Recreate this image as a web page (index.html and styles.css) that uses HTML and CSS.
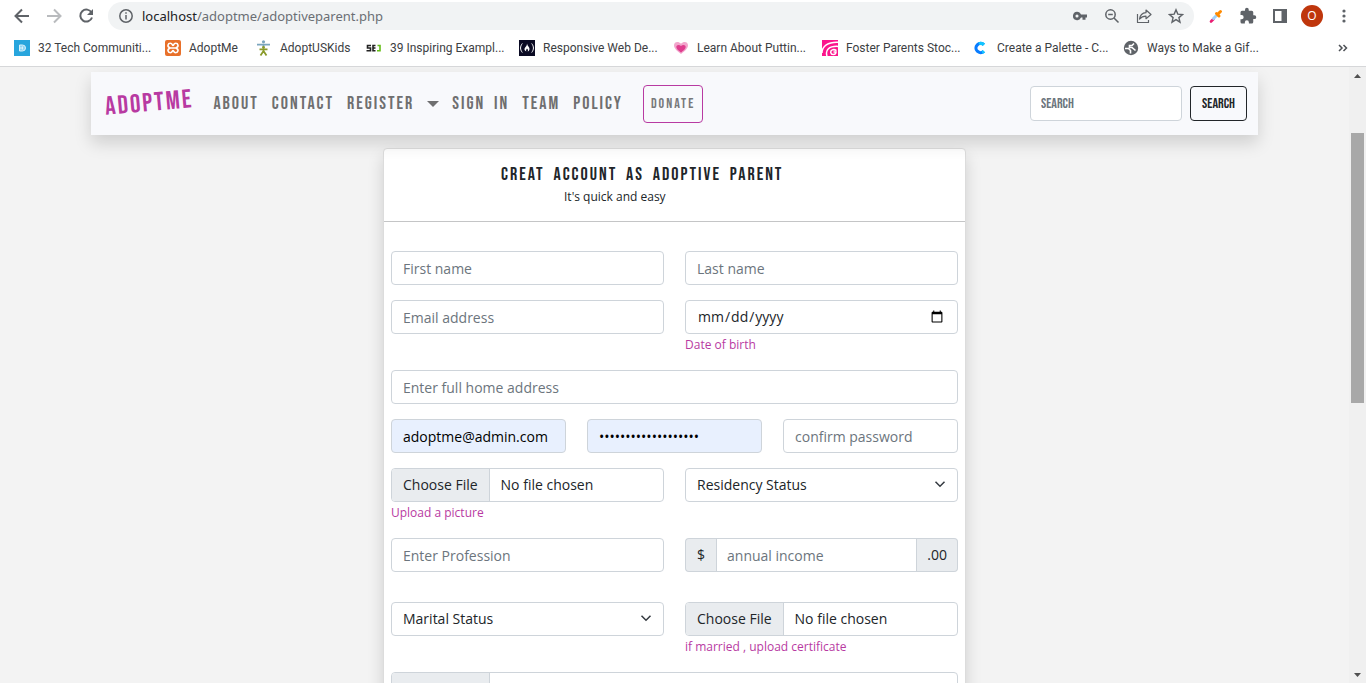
FILE: index.html
```html
<!DOCTYPE html>
<html lang="en-US">
<head>
<meta charset="utf-8">
<title>AdoptMe</title>
<link rel="stylesheet" href="styles.css">
</head>
<body>
<header class="browser">
  <div class="toolbar">
    <button class="tool" aria-label="Back"><svg width="20" height="20" viewBox="0 0 20 20" fill="none" stroke="#5f6368" stroke-width="2"><path d="M17 10H4M10 3.500L3.500 10l6.500 6.500"/></svg></button>
    <button class="tool" aria-label="Forward"><svg width="20" height="20" viewBox="0 0 20 20" fill="none" stroke="#b9bbbe" stroke-width="2"><path d="M3 10h13M10 3.500l6.500 6.500-6.500 6.500"/></svg></button>
    <button class="tool" aria-label="Reload"><svg width="20" height="20" viewBox="0 0 20 20"><path d="M15.600 6.700A6 6 0 1 0 16 11.500" fill="none" stroke="#5f6368" stroke-width="2"/><path d="M17 3v6h-6z" fill="#5f6368"/></svg></button>
    <div class="address">
      <svg width="16" height="16" viewBox="0 0 16 16" fill="none" stroke="#5f6368" stroke-width="1.500"><circle cx="8" cy="8" r="6.200"/><path d="M8 7v4.500M8 4.200v1.600"/></svg>
      <span class="url"><b>localhost</b>/adoptme/adoptiveparent.php</span>
      <button class="tool" aria-label="Passwords"><svg width="16" height="16" viewBox="0 0 16 16"><path fill="#5f6368" fill-rule="evenodd" d="M5 3.700a4.200 4.200 0 0 1 4 2.900h6v3h-1.500v2.200h-3V9.600H9A4.200 4.200 0 1 1 5 3.700zm0 2.700a1.500 1.500 0 1 0 0 3.100 1.500 1.500 0 0 0 0-3.100z"/></svg></button>
      <button class="tool" aria-label="Zoom out"><svg width="16" height="16" viewBox="0 0 16 16" fill="none" stroke="#5f6368" stroke-width="1.500"><circle cx="6.500" cy="6.500" r="4.700"/><path d="M10 10l4.500 4.500M4.200 6.500h4.600"/></svg></button>
      <button class="tool" aria-label="Share"><svg width="16" height="16" viewBox="0 0 16 16" fill="none" stroke="#5f6368" stroke-width="1.200" stroke-linejoin="round"><path d="M1.500 6v8.500h11V12M10 2l5 4.500-5 4.200V8.200c-3 0-4.800.8-6.500 2.800C4 7.600 6 5 10 4.700z"/></svg></button>
      <button class="tool" aria-label="Bookmark"><svg width="16" height="16" viewBox="0 0 16 16" fill="none" stroke="#5f6368" stroke-width="1.400"><path d="M8 1.800l1.800 4.300 4.700.4-3.600 3.100 1.100 4.600L8 11.700l-4 2.500 1.100-4.600-3.600-3.100 4.700-.4z"/></svg></button>
    </div>
    <button class="tool" aria-label="Color picker"><svg width="16" height="16" viewBox="0 0 16 16" stroke-linecap="round"><path d="M3 13.500l2.500-2.500" stroke="#e91e73" stroke-width="2.600"/><path d="M5.500 10.500L9 7" stroke="#9fd0fa" stroke-width="3"/><path d="M8.500 5.500l2.500 2.500M10.500 5.500l2-2" stroke="#ff8a00" stroke-width="3"/></svg></button>
    <button class="tool" aria-label="Extensions"><svg width="18" height="18" viewBox="0 0 24 24" fill="#5f6368"><path d="M20.500 11H19V7a2 2 0 0 0-2-2h-4V3.500a2.500 2.500 0 0 0-5 0V5H4a2 2 0 0 0-2 2v3.800h1.500a2.700 2.700 0 0 1 0 5.400H2V20a2 2 0 0 0 2 2h3.800v-1.500a2.700 2.700 0 0 1 5.400 0V22H17a2 2 0 0 0 2-2v-4h1.500a2.500 2.500 0 0 0 0-5z"/></svg></button>
    <button class="tool" aria-label="Side panel"><svg width="16" height="16" viewBox="0 0 16 16"><path fill="#5f6368" fill-rule="evenodd" d="M1 1h14v14H1zM3 3v10h6.500V3z"/></svg></button>
    <button class="tool" aria-label="Profile"><span class="avatar">O</span></button>
    <button class="tool" aria-label="Menu"><svg width="16" height="16" viewBox="0 0 16 16" fill="#5f6368"><circle cx="8" cy="3" r="1.600"/><circle cx="8" cy="8" r="1.600"/><circle cx="8" cy="13" r="1.600"/></svg></button>
  </div>
  <nav class="bookmarks" aria-label="Bookmarks">
    <a href="#"><svg width="16" height="16" viewBox="0 0 16 16"><path fill="#27a5dd" d="M0 0h16v16H0z"/><path d="M5.500 5h3a3 3 0 0 1 0 6h-3zM5 8h4M8.500 6.500v3" fill="#8ed3f2" stroke="#d7f0fb" stroke-width="1"/></svg>32 Tech Communiti...</a>
    <a href="#"><svg width="16" height="16" viewBox="0 0 16 16"><rect width="16" height="16" rx="2" fill="#e8702a"/><path d="M5.200 8C1.500 6.500 3 3.300 5.300 3.300S7.200 5.500 8 5.500s.4-2.200 2.700-2.200S14.500 6.500 10.800 8c3.700 1.500 2.200 4.700-.1 4.700S8.800 10.500 8 10.500s-.4 2.200-2.700 2.200S1.500 9.500 5.200 8zM5 8h6" fill="none" stroke="#fff" stroke-width="1.600"/></svg>AdoptMe</a>
    <a href="#"><svg width="16" height="16" viewBox="0 0 16 16" fill="none"><circle cx="7.500" cy="1.800" r="1.600" fill="#7ba5bd"/><path d="M1 4.600h13M7.500 4v4" stroke="#7ba5bd" stroke-width="1.800"/><circle cx="7.500" cy="7.500" r="1.400" fill="#8a9a2a"/><path d="M3.500 9.300h8M7.500 9v3M7.500 11l-3 4.500M7.500 11l3 4.500" stroke="#8a9a2a" stroke-width="1.800"/></svg>AdoptUSKids</a>
    <a href="#"><svg width="16" height="16" viewBox="0 0 16 16" fill="none" stroke-width="1.600"><path stroke="#222" d="M5 5.500H1.500V8h3v2.700H.5M9.500 5.500H7v5.200h2.500M7 8h2.500"/><path stroke="#64bd16" d="M11.500 5.500H14v5.200h-3"/></svg>39 Inspiring Exampl...</a>
    <a href="#"><svg width="16" height="16" viewBox="0 0 16 16"><path fill="#0a0a23" d="M0 0h16v16H0z"/><path d="M3.300 3.500c-2.300 3-2.300 6 0 9M12.700 3.500c2.300 3 2.300 6 0 9" stroke="#fff" fill="none"/><path d="M8 3.500c.3 2.500 2.700 3.500 2.500 5.500-.1 1.500-1 2.200-1.800 2.500.6-1.300.3-2-.7-3-.7 1.200-1.300 1.700-.7 3C5 10.500 5 8.600 6.500 7 7.500 6 8 5 8 3.500z" fill="#fff"/></svg>Responsive Web De...</a>
    <a href="#"><svg width="16" height="16" viewBox="0 0 16 16"><path fill="#f2a6cc" d="M8 14C4 11 1 8.500 1 5.300 1 1.600 5.500.8 8 3.800c2.500-3 7-2.200 7 1.500C15 8.500 12 11 8 14z"/><path fill="#df3d8e" d="M8 12.500c-2.600-2-4.700-3.700-4.700-5.500 0-2.400 3-2.800 4.700-1 1.700-1.800 4.700-1.400 4.700 1 0 1.800-2.100 3.500-4.700 5.500z"/></svg>Learn About Puttin...</a>
    <a href="#"><svg width="16" height="16" viewBox="0 0 16 16"><path fill="#fb158c" d="M0 0h16v16H0z"/><path d="M0 13C0 6 6 1.800 16 2.200M5 16c-2-6 2-10 11-9.600M14.500 10.600C11.500 8.600 8.400 10 8.800 12.600s5.200 2.600 5.200-.6h-2.500" fill="none" stroke="#fff" stroke-width="1.500"/></svg>Foster Parents Stoc...</a>
    <a href="#"><svg width="16" height="16" viewBox="0 0 16 16"><path d="M10.800 4.700A4.600 4.600 0 1 0 10.800 11.300" fill="none" stroke="#087cff" stroke-width="3.200"/><path d="M6 3.900a4.300 4.300 0 0 1 5 1M9 12.300a4 4 0 0 0 2-1.200" fill="none" stroke="#12c4ff" stroke-width="3.200"/></svg>Create a Palette - C...</a>
    <a href="#"><svg width="16" height="16" viewBox="0 0 16 16"><circle cx="8" cy="8" r="7.200" fill="#5f6368"/><path d="M2 8.500h3.500l2 2v3M12.500 10.500L9 7.500H6.500V5.500H9L11 3.500" fill="none" stroke="#fff" stroke-width="1.600"/></svg>Ways to Make a Gif...</a>
    <button class="tool more" aria-label="More bookmarks"><svg width="10" height="10" viewBox="0 0 10 10" fill="none" stroke="#4d5156" stroke-width="1.500"><path d="M1 2l3 3-3 3M5.500 2l3 3-3 3"/></svg></button>
  </nav>
</header>

<div class="viewport">
  <main class="page">
    <nav class="navbar">
      <a class="brand" href="#">ADOPTME</a>
      <div class="links">
        <a href="#">ABOUT</a>
        <a href="#">CONTACT</a>
        <a class="toggle" href="#">REGISTER</a>
        <a href="#">SIGN IN</a>
        <a href="#">TEAM</a>
        <a href="#">POLICY</a>
      </div>
      <button class="donate">DONATE</button>
      <form class="search">
        <input type="search" placeholder="SEARCH" aria-label="Search">
        <button type="button">SEARCH</button>
      </form>
    </nav>

    <section class="card">
      <div class="card-head">
        <h1>CREAT ACCOUNT AS ADOPTIVE PARENT</h1>
        <p>It's quick and easy</p>
      </div>
      <form class="form">
        <div class="row">
          <div class="field"><input class="control" type="text" placeholder="First name" aria-label="First name"></div>
          <div class="field"><input class="control" type="text" placeholder="Last name" aria-label="Last name"></div>
        </div>
        <div class="row">
          <div class="field"><input class="control" type="email" placeholder="Email address" aria-label="Email address"></div>
          <div class="field"><input class="control" type="date" id="birth"><label for="birth">Date of birth</label></div>
        </div>
        <div class="row">
          <div class="field"><input class="control" type="text" placeholder="Enter full home address" aria-label="Home address"></div>
        </div>
        <div class="row">
          <div class="field"><input class="control filled" type="text" value="adoptme@admin.com" aria-label="Username"></div>
          <div class="field"><input class="control filled" type="password" value="adoptmeadminaccount" aria-label="Password"></div>
          <div class="field"><input class="control" type="password" placeholder="confirm password" aria-label="Confirm password"></div>
        </div>
        <div class="row">
          <div class="field"><input class="control" type="file" id="picture"><label for="picture">Upload a picture</label></div>
          <div class="field"><div class="select"><select class="control" aria-label="Residency Status"><option>Residency Status</option></select><svg width="12" height="12" viewBox="0 0 16 16"><path d="M2 5l6 6 6-6"/></svg></div></div>
        </div>
        <div class="row spaced">
          <div class="field"><input class="control" type="text" placeholder="Enter Profession" aria-label="Profession"></div>
          <div class="field"><div class="group"><span>$</span><input class="control" type="text" placeholder="annual income" aria-label="Annual income"><span>.00</span></div></div>
        </div>
        <div class="row">
          <div class="field"><div class="select"><select class="control" aria-label="Marital Status"><option>Marital Status</option></select><svg width="12" height="12" viewBox="0 0 16 16"><path d="M2 5l6 6 6-6"/></svg></div></div>
          <div class="field"><input class="control" type="file" id="certificate"><label for="certificate">if married , upload certificate</label></div>
        </div>
        <div class="row">
          <div class="field"><input class="control large" type="file" aria-label="Document"></div>
        </div>
      </form>
    </section>
  </main>
  <div class="scrollbar" aria-hidden="true">
    <svg width="9" height="5" viewBox="0 0 9 5"><path d="M1 5l3.500-4L8 5z"/></svg>
    <div class="track"><div class="thumb"></div></div>
    <svg width="9" height="5" viewBox="0 0 9 5"><path d="M1 0l3.500 4L8 0z"/></svg>
  </div>
</div>
</body>
</html>
```
FILE: styles.css
```css
* { box-sizing: border-box; }

body {
  --display: "Bebas Neue", "Roboto Condensed", Roboto, sans-serif;
  margin: 0;
  height: 100vh;
  display: flex;
  flex-direction: column;
  overflow: hidden;
  font-family: "Open Sans", "Noto Sans", sans-serif;
  font-size: 14px;
  color: #212529;
  background: #f3f3f3;
}

a { color: inherit; text-decoration: none; }
button, input, select { font: inherit; color: inherit; }
svg { flex: none; }

/* Browser frame */
.browser {
  flex: none;
  background: #fff;
  border-bottom: 1px solid #d6d7d9;
}

.toolbar {
  display: flex;
  align-items: center;
  height: 32px;
  padding: 0 6px;
}

.tool {
  flex: none;
  display: flex;
  align-items: center;
  justify-content: center;
  width: 32px;
  height: 28px;
  padding: 0;
  border: 0;
  background: none;
}

.address {
  flex: 1;
  display: flex;
  align-items: center;
  height: 28px;
  margin: 0 6px;
  padding: 0 2px 0 10px;
  border-radius: 14px;
  background: #f1f3f4;
}

.url { flex: 1; padding-left: 8px; color: #6b6f74; font-family: "Noto Sans", sans-serif; font-size: 13px; }
.url b { font-weight: 400; color: #202124; }

.avatar {
  width: 22px;
  border-radius: 50%;
  background: #bf360c;
  color: #fff;
  font-size: 12px;
  line-height: 22px;
}

.bookmarks {
  display: grid;
  grid-template-columns: 151px 91px 110px 153px 154px 149px 151px 150px 1fr 32px;
  align-items: center;
  height: 34px;
  padding: 0 7px 2px 14px;
  font-family: Roboto, sans-serif;
  font-size: 12px;
  color: #3c4043;
  white-space: nowrap;
}

.bookmarks a { display: flex; align-items: center; gap: 8px; }

/* Page area */
.viewport { flex: 1; display: flex; min-height: 0; }
.page { flex: 1; min-width: 0; overflow: hidden; padding-top: 5px; }

.scrollbar {
  flex: none;
  display: flex;
  flex-direction: column;
  align-items: center;
  width: 17px;
  padding: 6px 0 5px;
  background: #f0f0f0;
  fill: #505050;
}

.track { flex: 1; width: 13px; padding-top: 55px; }
.thumb { height: 50%; background: #a8a8a8; }

/* Site navigation */
.navbar {
  position: relative;
  z-index: 1;
  display: flex;
  align-items: center;
  height: 63px;
  margin: 0 91px 13px;
  padding: 0 11px 0 14px;
  background: #f8f9fc;
  box-shadow: 0 8px 16px rgba(0, 0, 0, .15);
  font-family: var(--display);
}

.brand {
  color: #b83aa2;
  font-size: 26px;
  letter-spacing: 2px;
  transform: rotate(-5deg);
}

.links {
  display: flex;
  gap: 13px;
  margin: 0 20px;
  font-size: 18px;
  letter-spacing: 2px;
  word-spacing: 4px;
  color: #6f6f70;
  white-space: nowrap;
}

.toggle { display: flex; align-items: center; gap: 13px; }
.toggle::after {
  content: "";
  border: 6px solid transparent;
  border-top-color: currentColor;
  border-bottom: 0;
}

.donate {
  height: 38px;
  padding: 0 7px;
  border: 1px solid #b83aa2;
  border-radius: 4px;
  background: none;
  color: #77787a;
  font-size: 14px;
  letter-spacing: 2px;
}

.search { display: flex; gap: 8px; margin-left: auto; font-size: 14px; }
.search input, .search button { height: 35px; border: 1px solid #ced4da; border-radius: 4px; }
.search input { width: 152px; padding: 0 10px; background: #fff; }
.search button { width: 57px; padding: 0; border-color: #212529; background: none; }

/* Registration card */
.card {
  width: 100%;
  max-width: 583px;
  margin: 0 auto;
  border: 1px solid #dcdcdc;
  border-radius: 4px;
  background: #fff;
  box-shadow: 0 8px 16px rgba(0, 0, 0, .15);
}

.card-head { padding: 15px 0 13px; border-bottom: 1px solid #c4c5c6; }
.card-head h1 {
  margin: 0 0 0 117px;
  font-family: var(--display);
  font-size: 18px;
  font-weight: 500;
  letter-spacing: 2px;
  word-spacing: 4px;
  line-height: 22px;
}
.card-head p { margin: 0 0 0 180px; font-size: 12px; line-height: 22px; }

.form { display: flex; flex-direction: column; gap: 15px; padding: 29px 7px; }
.row { display: flex; gap: 21px; }
.spaced { margin-bottom: 15px; }
.field { flex: 1; min-width: 0; }
.field label { display: block; color: #b83aa2; font-size: 12px; line-height: 21px; }

.control {
  display: block;
  width: 100%;
  height: 34px;
  padding: 0 11px;
  border: 1px solid #ced4da;
  border-radius: 4px;
  background: #fff;
  line-height: 32px;
  outline: 0;
}

::placeholder { color: #6c757d; opacity: 1; }
.filled { background: #e8f0fe; color: #000; }

.control::file-selector-button {
  height: 32px;
  margin: 0 11px 0 -11px;
  padding: 0 11px;
  border: 0;
  border-right: 1px solid #ced4da;
  background: #e9ecef;
  color: inherit;
  font: inherit;
}

.large { height: 40px; line-height: 38px; }
.large::file-selector-button { height: 38px; }

.select { position: relative; }
.select select { appearance: none; }
.select svg {
  position: absolute;
  top: 10px;
  right: 12px;
  fill: none;
  stroke: #343a40;
  stroke-width: 2;
  pointer-events: none;
}

.group { display: flex; }
.group .control { flex: 1; min-width: 0; border-radius: 0; padding: 0 10px; }
.group span {
  padding: 0 10px;
  border: 1px solid #ced4da;
  background: #e9ecef;
  line-height: 32px;
}
.group span:first-child { padding: 0 11px; border-right: 0; border-radius: 4px 0 0 4px; }
.group span:last-child { border-left: 0; border-radius: 0 4px 4px 0; }
```
